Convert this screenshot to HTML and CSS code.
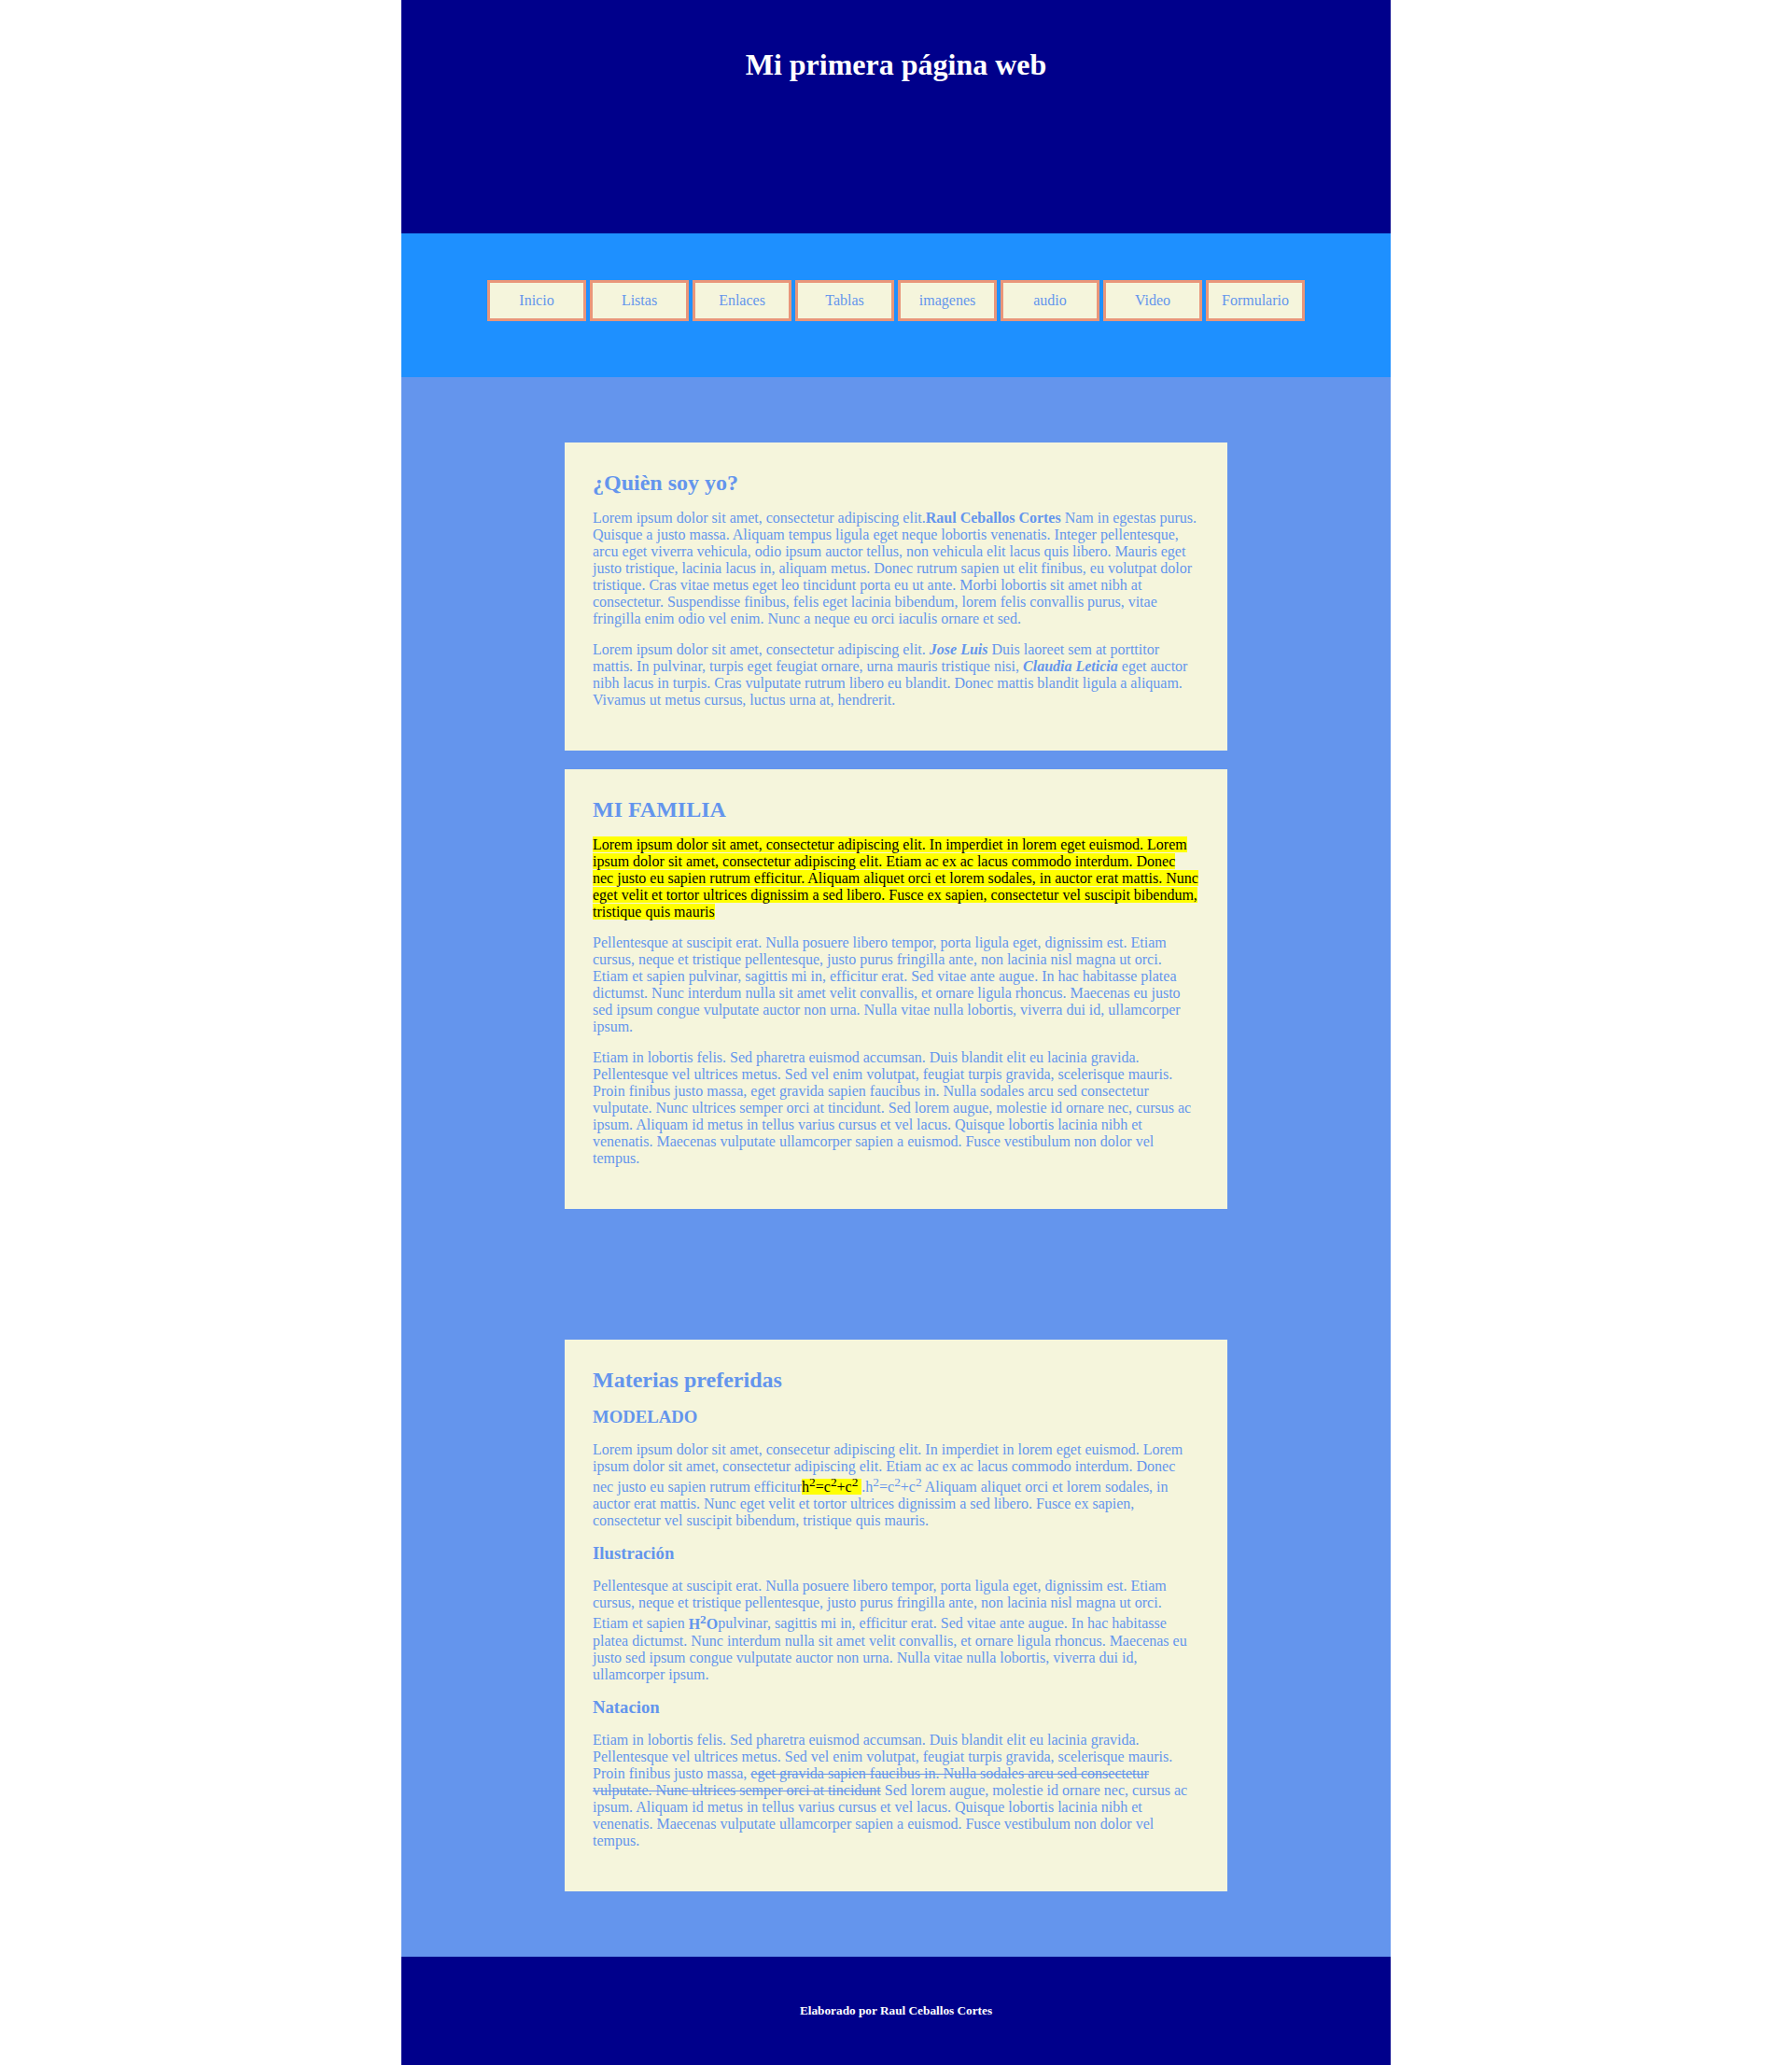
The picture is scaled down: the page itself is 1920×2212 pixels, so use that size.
FILE: index.html
```html
<!DOCTYPE html>
<html lang="es">
<head>
<meta charset="utf-8">
<title>Mi primera página web</title>
<link rel="stylesheet" href="styles.css">
</head>
<body>
<div class="page">
  <header class="site-header">
    <h1 class="site-title">Mi primera página web</h1>
  </header>
  <nav class="site-nav">
    <a class="nav-btn" href="#">Inicio</a>
    <a class="nav-btn" href="#">Listas</a>
    <a class="nav-btn" href="#">Enlaces</a>
    <a class="nav-btn" href="#">Tablas</a>
    <a class="nav-btn" href="#">imagenes</a>
    <a class="nav-btn" href="#">audio</a>
    <a class="nav-btn" href="#">Video</a>
    <a class="nav-btn" href="#">Formulario</a>
  </nav>
  <main class="site-main">
    <section class="card">
      <h2 class="card-title">¿Quièn soy yo?</h2>
      <p class="text">Lorem ipsum dolor sit amet, consectetur adipiscing elit.<b>Raul Ceballos Cortes</b> Nam in egestas purus. Quisque a justo massa. Aliquam tempus ligula eget neque lobortis venenatis. Integer pellentesque, arcu eget viverra vehicula, odio ipsum auctor tellus, non vehicula elit lacus quis libero. Mauris eget justo tristique, lacinia lacus in, aliquam metus. Donec rutrum sapien ut elit finibus, eu volutpat dolor tristique. Cras vitae metus eget leo tincidunt porta eu ut ante. Morbi lobortis sit amet nibh at consectetur. Suspendisse finibus, felis eget lacinia bibendum, lorem felis convallis purus, vitae fringilla enim odio vel enim. Nunc a neque eu orci iaculis ornare et sed.</p>
      <p class="text">Lorem ipsum dolor sit amet, consectetur adipiscing elit. <b><i>Jose Luis</i></b> Duis laoreet sem at porttitor mattis. In pulvinar, turpis eget feugiat ornare, urna mauris tristique nisi, <b><i>Claudia Leticia</i></b> eget auctor nibh lacus in turpis. Cras vulputate rutrum libero eu blandit. Donec mattis blandit ligula a aliquam. Vivamus ut metus cursus, luctus urna at, hendrerit.</p>
    </section>
    <section class="card">
      <h2 class="card-title">MI FAMILIA</h2>
      <p class="text"><mark class="hl">Lorem ipsum dolor sit amet, consectetur adipiscing elit. In imperdiet in lorem eget euismod. Lorem ipsum dolor sit amet, consectetur adipiscing elit. Etiam ac ex ac lacus commodo interdum. Donec nec justo eu sapien rutrum efficitur. Aliquam aliquet orci et lorem sodales, in auctor erat mattis. Nunc eget velit et tortor ultrices dignissim a sed libero. Fusce ex sapien, consectetur vel suscipit bibendum, tristique quis mauris</mark></p>
      <p class="text">Pellentesque at suscipit erat. Nulla posuere libero tempor, porta ligula eget, dignissim est. Etiam cursus, neque et tristique pellentesque, justo purus fringilla ante, non lacinia nisl magna ut orci. Etiam et sapien pulvinar, sagittis mi in, efficitur erat. Sed vitae ante augue. In hac habitasse platea dictumst. Nunc interdum nulla sit amet velit convallis, et ornare ligula rhoncus. Maecenas eu justo sed ipsum congue vulputate auctor non urna. Nulla vitae nulla lobortis, viverra dui id, ullamcorper ipsum.</p>
      <p class="text">Etiam in lobortis felis. Sed pharetra euismod accumsan. Duis blandit elit eu lacinia gravida. Pellentesque vel ultrices metus. Sed vel enim volutpat, feugiat turpis gravida, scelerisque mauris. Proin finibus justo massa, eget gravida sapien faucibus in. Nulla sodales arcu sed consectetur vulputate. Nunc ultrices semper orci at tincidunt. Sed lorem augue, molestie id ornare nec, cursus ac ipsum. Aliquam id metus in tellus varius cursus et vel lacus. Quisque lobortis lacinia nibh et venenatis. Maecenas vulputate ullamcorper sapien a euismod. Fusce vestibulum non dolor vel tempus.</p>
    </section>
    <section class="card card-spaced">
      <h2 class="card-title">Materias preferidas</h2>
      <h3 class="card-sub">MODELADO</h3>
      <p class="text">Lorem ipsum dolor sit amet, consecetur adipiscing elit. In imperdiet in lorem eget euismod. Lorem ipsum dolor sit amet, consectetur adipiscing elit. Etiam ac ex ac lacus commodo interdum. Donec nec justo eu sapien rutrum efficitur<mark class="hl">h<sup>2</sup>=c<sup>2</sup>+c<sup>2</sup> </mark>.h<sup>2</sup>=c<sup>2</sup>+c<sup>2</sup> Aliquam aliquet orci et lorem sodales, in auctor erat mattis. Nunc eget velit et tortor ultrices dignissim a sed libero. Fusce ex sapien, consectetur vel suscipit bibendum, tristique quis mauris.</p>
      <h3 class="card-sub">Ilustración</h3>
      <p class="text">Pellentesque at suscipit erat. Nulla posuere libero tempor, porta ligula eget, dignissim est. Etiam cursus, neque et tristique pellentesque, justo purus fringilla ante, non lacinia nisl magna ut orci. Etiam et sapien <b>H<sup>2</sup>O</b>pulvinar, sagittis mi in, efficitur erat. Sed vitae ante augue. In hac habitasse platea dictumst. Nunc interdum nulla sit amet velit convallis, et ornare ligula rhoncus. Maecenas eu justo sed ipsum congue vulputate auctor non urna. Nulla vitae nulla lobortis, viverra dui id, ullamcorper ipsum.</p>
      <h3 class="card-sub">Natacion</h3>
      <p class="text">Etiam in lobortis felis. Sed pharetra euismod accumsan. Duis blandit elit eu lacinia gravida. Pellentesque vel ultrices metus. Sed vel enim volutpat, feugiat turpis gravida, scelerisque mauris. Proin finibus justo massa, <del>eget gravida sapien faucibus in. Nulla sodales arcu sed consectetur vulputate. Nunc ultrices semper orci at tincidunt</del> Sed lorem augue, molestie id ornare nec, cursus ac ipsum. Aliquam id metus in tellus varius cursus et vel lacus. Quisque lobortis lacinia nibh et venenatis. Maecenas vulputate ullamcorper sapien a euismod. Fusce vestibulum non dolor vel tempus.</p>
    </section>
  </main>
  <footer class="site-footer">
    <h5 class="footer-text">Elaborado por Raul Ceballos Cortes</h5>
  </footer>
</div>
</body>
</html>
```
FILE: styles.css
```css
html, body {
  margin: 0;
  padding: 0;
  background: #ffffff;
}

body {
  font-family: "Liberation Serif", "Times New Roman", serif;
  font-size: 16px;
  color: #6495ed;
}

.page {
  width: 1060px;
  margin: 0 auto;
}

.site-header {
  box-sizing: border-box;
  height: 250px;
  padding-top: 30px;
  background: #00008b;
  text-align: center;
}

.site-title {
  margin: 21px 0;
  font-size: 32px;
  font-weight: bold;
  color: #ffffff;
}

.site-nav {
  display: flex;
  justify-content: center;
  gap: 4px;
  padding: 50px 0 60px;
  background: #1e90ff;
}

.nav-btn {
  display: block;
  width: 100px;
  padding: 10px 0;
  border: 3px solid #e9967a;
  background: #f5f5dc;
  color: #6495ed;
  text-align: center;
  text-decoration: none;
}

.site-main {
  padding: 70px 0;
  background: #6495ed;
}

.card {
  width: 650px;
  margin: 20px auto;
  padding: 30px;
  background: #f5f5dc;
}

.site-main > .card:first-child {
  margin-top: 0;
}

.site-main > .card:last-child {
  margin-bottom: 0;
}

.card-spaced {
  margin-top: 140px;
}

.card-title {
  margin: 0 0 15px;
  font-size: 24px;
  font-weight: bold;
}

.card-sub {
  margin: 15px 0;
  font-size: 18.72px;
  font-weight: bold;
}

.text {
  margin: 15px 0;
}

.hl {
  background: #ffff00;
  color: #000000;
}

.site-footer {
  padding: 28px 0;
  background: #00008b;
  text-align: center;
}

.footer-text {
  margin: 22px 0;
  font-size: 13.28px;
  font-weight: bold;
  color: #ffffff;
}
```
